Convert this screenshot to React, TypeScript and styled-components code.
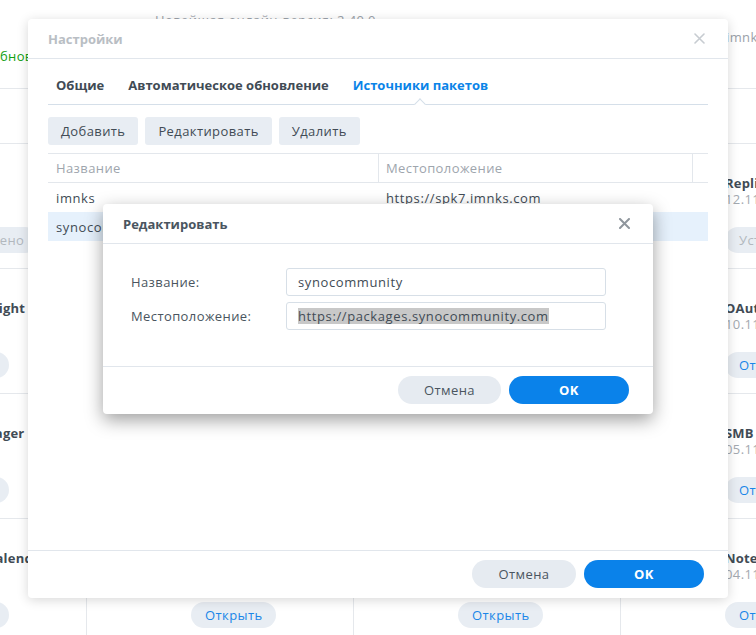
import React from 'react';
import styled, { createGlobalStyle } from 'styled-components';

const GlobalStyle = createGlobalStyle`
  html, body {
    margin: 0;
    padding: 0;
    background: #fff;
  }
  body {
    font-family: 'Open Sans', 'Noto Sans', sans-serif;
    font-size: 13px;
    letter-spacing: 0.4px;
    color: #414b55;
  }
  * {
    box-sizing: border-box;
  }
`;

type Pkg = { title: string; date: string; action: string; installed?: boolean };

const packageRows: Pkg[][] = [
    [
        { title: 'Plex', date: '14.11.2024', action: 'Установлено', installed: true },
        { title: 'Hyper Backup', date: '13.11.2024', action: 'Открыть' },
        { title: 'Web Station', date: '13.11.2024', action: 'Открыть' },
        { title: 'Replication Service', date: '12.11.2024', action: 'Установлено', installed: true },
    ],
    [
        { title: 'Activity Insight', date: '11.11.2024', action: 'Открыть' },
        { title: 'Storage Analyzer', date: '11.11.2024', action: 'Открыть' },
        { title: 'Universal Search', date: '10.11.2024', action: 'Открыть' },
        { title: 'OAuth Service', date: '10.11.2024', action: 'Открыть' },
    ],
    [
        { title: 'Proxy Manager', date: '06.11.2024', action: 'Открыть' },
        { title: 'Text Editor', date: '06.11.2024', action: 'Открыть' },
        { title: 'Download Station', date: '05.11.2024', action: 'Открыть' },
        { title: 'SMB Service', date: '05.11.2024', action: 'Открыть' },
    ],
    [
        { title: 'Synology Calendar', date: '04.11.2024', action: 'Открыть' },
        { title: 'Synology Contacts', date: '04.11.2024', action: 'Открыть' },
        { title: 'Synology Photos', date: '04.11.2024', action: 'Открыть' },
        { title: 'Note Station', date: '04.11.2024', action: 'Открыть' },
    ],
];

const sources = [
    { name: 'imnks', url: 'https://spk7.imnks.com' },
    { name: 'synocommunity', url: 'https://packages.synocommunity.com', selected: true },
];

const CloseIcon = ({ color, width }: { color: string; width: number }) => (
    <svg width="11" height="11" viewBox="0 0 11 11">
        <path d="M1 1L10 10M10 1L1 10" stroke={color} strokeWidth={width} strokeLinecap="round" />
    </svg>
);

export default function App() {
    return (
        <>
            <GlobalStyle />
            <Screen>
                <Backdrop>
                    <Band $h={89}>
                        <TopCell $pl={105} $pt={47}>
                            <UpdateNote>Доступно обнов.</UpdateNote>
                        </TopCell>
                        <TopCell $pl={68} $pt={11}>
                            <MutedLine>Новейшая онлайн-версия: 2.40.0</MutedLine>
                        </TopCell>
                        <TopCell $pl={105} $pt={8} />
                        <TopCell $pl={105} $pt={28}>
                            <MutedLine>imnks</MutedLine>
                        </TopCell>
                    </Band>
                    <Band $h={55} />
                    <CardGrid>
                        {packageRows.flat().map((p, i) => (
                            <Card key={i}>
                                <CardTitle>{p.title}</CardTitle>
                                <CardDate>{p.date}</CardDate>
                                <Pill $installed={p.installed}>{p.action}</Pill>
                            </Card>
                        ))}
                    </CardGrid>
                </Backdrop>

                <SettingsWindow>
                    <WinHeader>
                        <WinTitle $active={false}>Настройки</WinTitle>
                        <CloseIcon color="#c7ccd1" width={1.6} />
                    </WinHeader>
                    <WinBody>
                        <TabBar>
                            <Tab>Общие</Tab>
                            <Tab>Автоматическое обновление</Tab>
                            <Tab $active>Источники пакетов</Tab>
                        </TabBar>
                        <Toolbar>
                            <ToolButton>Добавить</ToolButton>
                            <ToolButton>Редактировать</ToolButton>
                            <ToolButton>Удалить</ToolButton>
                        </Toolbar>
                        <Table>
                            <HeadCell>Название</HeadCell>
                            <HeadCell $divider>Местоположение</HeadCell>
                            <HeadCell $divider />
                            {sources.map((s) => (
                                <React.Fragment key={s.name}>
                                    <BodyCell $selected={s.selected}>{s.name}</BodyCell>
                                    <BodyCell $selected={s.selected}>{s.url}</BodyCell>
                                    <BodyCell $selected={s.selected} />
                                </React.Fragment>
                            ))}
                        </Table>
                    </WinBody>
                    <WinFooter $right={24}>
                        <RoundButton $w={104}>Отмена</RoundButton>
                        <RoundButton $w={120} $primary>OK</RoundButton>
                    </WinFooter>
                </SettingsWindow>

                <EditDialog>
                    <WinHeader>
                        <WinTitle $active>Редактировать</WinTitle>
                        <CloseIcon color="#8f969d" width={2} />
                    </WinHeader>
                    <Form>
                        <FieldLabel>Название:</FieldLabel>
                        <Field>synocommunity</Field>
                        <FieldLabel>Местоположение:</FieldLabel>
                        <Field>
                            <Selected>https://packages.synocommunity.com</Selected>
                        </Field>
                    </Form>
                    <WinFooter $right={24}>
                        <RoundButton $w={103}>Отмена</RoundButton>
                        <RoundButton $w={120} $primary>OK</RoundButton>
                    </WinFooter>
                </EditDialog>
            </Screen>
        </>
    );
}

const Screen = styled.div`
    position: relative;
    width: 756px;
    height: 635px;
    overflow: hidden;
    background: #fff;
`
const Backdrop = styled.div`
    margin-left: -180px;
    width: 1068px;
`
const Band = styled.div<{ $h: number }>`
    display: grid;
    grid-template-columns: repeat(4, 267px);
    height: ${p => p.$h}px;
    border-bottom: 1px solid #e5e8ec;
`
const TopCell = styled.div<{ $pl: number; $pt: number }>`
    padding: ${p => p.$pt}px 0 0 ${p => p.$pl}px;
    white-space: nowrap;
`
const UpdateNote = styled.div`
    color: #12a012;
    line-height: 18px;
`
const MutedLine = styled.div`
    color: #9aa1a9;
    line-height: 18px;
`
const CardGrid = styled.div`
    display: grid;
    grid-template-columns: repeat(4, 267px);
    grid-auto-rows: 125px;
`
const Card = styled.div`
    display: flex;
    flex-direction: column;
    align-items: flex-start;
    padding: 31px 0 0 104px;
    border-bottom: 1px solid #e5e8ec;
    border-right: 1px solid #e5e8ec;
    white-space: nowrap;
`
const CardTitle = styled.div`
    font-weight: 700;
    letter-spacing: 0.2px;
    line-height: 16px;
    color: #414b55;
`
const CardDate = styled.div`
    line-height: 16px;
    color: #a3a9b0;
`
const Pill = styled.div<{ $installed?: boolean }>`
    margin-top: 20px;
    height: 26px;
    padding: 0 14px;
    border-radius: 13px;
    background: #e8edf3;
    display: flex;
    align-items: center;
    color: ${p => (p.$installed ? '#b2b8be' : '#1a86e8')};
`
const SettingsWindow = styled.section`
    position: absolute;
    left: 28px;
    top: 19px;
    width: 700px;
    height: 579px;
    background: #fff;
    border-radius: 4px;
    box-shadow: 0 2px 12px rgba(0, 0, 0, 0.16);
    display: flex;
    flex-direction: column;
`
const EditDialog = styled.section`
    position: absolute;
    left: 103px;
    top: 204px;
    width: 550px;
    height: 210px;
    background: #fff;
    border-radius: 4px;
    box-shadow: 0 6px 18px rgba(0, 0, 0, 0.38);
    display: flex;
    flex-direction: column;
`
const WinHeader = styled.header`
    flex-shrink: 0;
    height: 40px;
    padding: 0 23px 0 20px;
    display: flex;
    align-items: center;
    justify-content: space-between;
    border-bottom: 1px solid #e1e6ec;
`
const WinTitle = styled.div<{ $active: boolean }>`
    font-weight: 700;
    letter-spacing: 0;
    color: ${p => (p.$active ? '#4a5560' : '#b9bec4')};
`
const WinBody = styled.div`
    padding: 0 20px;
    display: flex;
    flex-direction: column;
`
const TabBar = styled.nav`
    height: 46px;
    display: flex;
    align-items: flex-end;
    gap: 24px;
    padding-left: 8px;
    border-bottom: 1px solid #d5dfe9;
`
const Tab = styled.div<{ $active?: boolean }>`
    position: relative;
    padding-bottom: 10px;
    line-height: 18px;
    font-weight: 700;
    letter-spacing: 0;
    color: ${p => (p.$active ? '#0a84e8' : '#414b55')};

    &::after {
        content: '';
        display: ${p => (p.$active ? 'block' : 'none')};
        position: absolute;
        left: 50%;
        bottom: -4px;
        width: 7px;
        height: 7px;
        background: #fff;
        border-top: 1px solid #d5dfe9;
        border-left: 1px solid #d5dfe9;
        transform: translateX(-50%) rotate(45deg);
    }
`
const Toolbar = styled.div`
    display: flex;
    gap: 7px;
    margin-top: 12px;
`
const ToolButton = styled.button`
    height: 28px;
    padding: 0 13px;
    border: none;
    border-radius: 3px;
    background: #e8edf3;
    font: inherit;
    letter-spacing: inherit;
    color: #414b55;
`
const Table = styled.div`
    margin-top: 8px;
    display: grid;
    grid-template-columns: 330px 314px 16px;
    grid-auto-rows: 29px;
    border-top: 1px solid #e3e7ec;
`
const HeadCell = styled.div<{ $divider?: boolean }>`
    display: flex;
    align-items: center;
    padding-left: ${p => (p.$divider ? 7 : 8)}px;
    color: #9ea5ad;
    border-bottom: 1px solid #e3e7ec;
    border-left: ${p => (p.$divider ? '1px solid #e3e7ec' : 'none')};
`
const BodyCell = styled.div<{ $selected?: boolean }>`
    display: flex;
    align-items: center;
    padding-left: 8px;
    white-space: nowrap;
    letter-spacing: 0.6px;
    color: #414b55;
    background: ${p => (p.$selected ? '#e6f1fc' : 'transparent')};
`
const WinFooter = styled.footer<{ $right: number }>`
    margin-top: auto;
    flex-shrink: 0;
    height: 48px;
    padding: 9px ${p => p.$right}px 0 0;
    display: flex;
    justify-content: flex-end;
    gap: 8px;
    border-top: 1px solid #e1e6ec;
`
const RoundButton = styled.button<{ $w: number; $primary?: boolean }>`
    width: ${p => p.$w}px;
    height: 28px;
    border: none;
    border-radius: 14px;
    font: inherit;
    letter-spacing: inherit;
    font-weight: ${p => (p.$primary ? 700 : 400)};
    background: ${p => (p.$primary ? '#0a82ea' : '#e6ebf1')};
    color: ${p => (p.$primary ? '#fff' : '#4a5560')};
`
const Form = styled.div`
    display: grid;
    grid-template-columns: 155px 320px;
    grid-auto-rows: 28px;
    row-gap: 6px;
    padding: 24px 0 0 28px;
`
const FieldLabel = styled.div`
    display: flex;
    align-items: center;
    color: #4a5560;
`
const Field = styled.div`
    display: flex;
    align-items: center;
    padding-left: 11px;
    border: 1px solid #d7dfe7;
    border-radius: 3px;
    letter-spacing: 0.6px;
    color: #414b55;
    white-space: nowrap;
`
const Selected = styled.span`
    background: #c8c8c8;
    line-height: 16px;
`
